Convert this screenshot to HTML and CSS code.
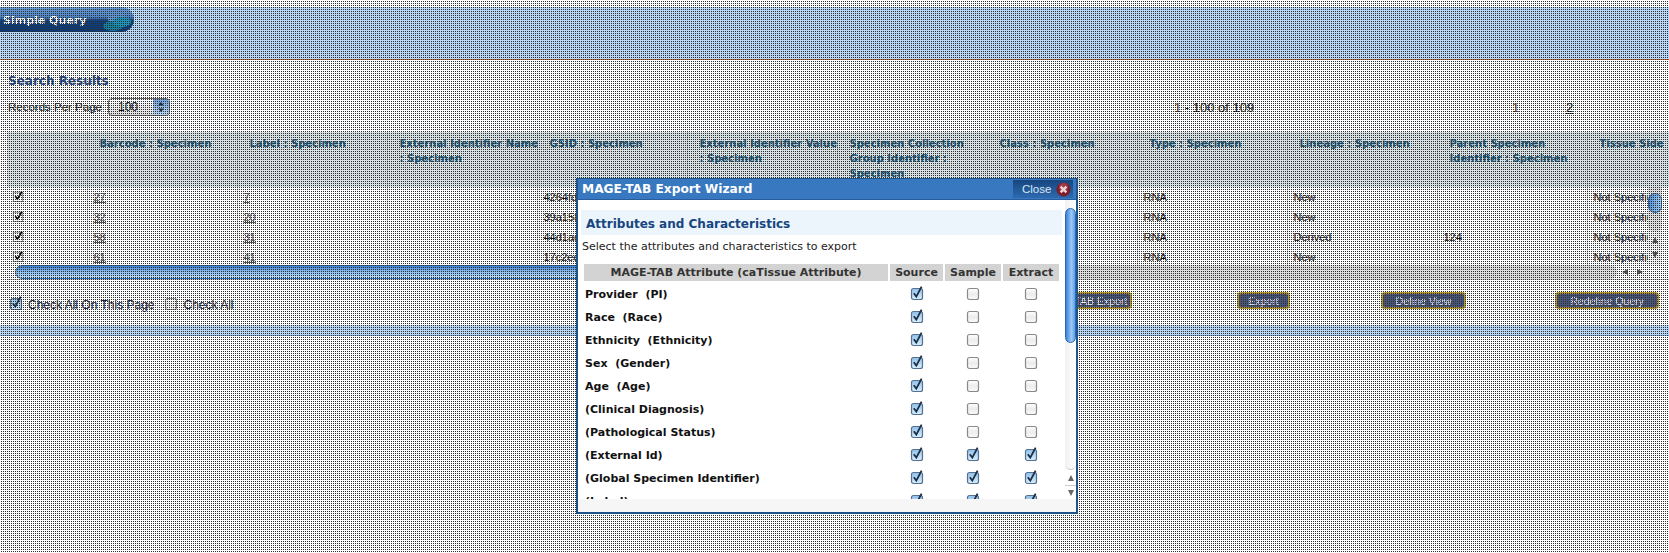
FILE: index.html
```html
<!DOCTYPE html>
<html lang="en">
<head>
<meta charset="utf-8">
<title>Search Results</title>
<link rel="stylesheet" href="styles.css">
</head>
<body>
<svg class="defs" width="0" height="0" aria-hidden="true">
  <defs>
    <linearGradient id="cbOn" x1="0" y1="0" x2="0" y2="1"><stop offset="0" stop-color="#8fbfe8"/><stop offset=".5" stop-color="#b5d9f5"/><stop offset="1" stop-color="#d6eefc"/></linearGradient>
    <linearGradient id="cbOff" x1="0" y1="0" x2="0" y2="1"><stop offset="0" stop-color="#fff"/><stop offset=".5" stop-color="#ececec"/><stop offset="1" stop-color="#fafafa"/></linearGradient>
    <symbol id="cb-on" viewBox="0 0 14 16"><rect x="1.5" y="3.5" width="11" height="11" rx="2" fill="url(#cbOn)" stroke="#56708f" stroke-width="1.2"/><path d="M3.8 8.2 6.3 11.6 11.6 1.6" fill="none" stroke="#1c2d44" stroke-width="1.8"/></symbol>
    <symbol id="cb-off" viewBox="0 0 14 16"><rect x="1.5" y="3.5" width="11" height="11" rx="2" fill="url(#cbOff)" stroke="#8a8a8a" stroke-width="1.2"/></symbol>
    <symbol id="cb-plain" viewBox="0 0 14 16"><rect x="1.5" y="3.5" width="11" height="11" fill="#fff" stroke="#777"/><path d="M3.8 8.2 6.3 11.6 11.6 3" fill="none" stroke="#000" stroke-width="2"/></symbol>
  </defs>
</svg>

<div class="page">
  <header class="topband">
    <div class="tab"><span class="tab-label">Simple Query</span>
      <svg class="tab-art" width="36" height="25" viewBox="0 0 36 25"><circle cx="18" cy="9" r="9" fill="#5f94d2"/><ellipse cx="15" cy="19" rx="10" ry="5" fill="#14809f"/><ellipse cx="24" cy="15" rx="9" ry="5" fill="#1a94b8"/></svg>
    </div>
  </header>

  <main class="results">
    <h2 class="results-title">Search Results</h2>
    <div class="toolbar">
      <div class="tb-left">
        <span>Records Per Page</span>
        <span class="select"><span class="select-value">100</span><span class="select-arrows"><svg width="8" height="12" viewBox="0 0 8 12"><path d="M4 1 7 4.6H1ZM4 11 1 7.4H7Z" fill="#1d2b3c"/></svg></span></span>
      </div>
      <div class="tb-count"><span class="accent">1</span> - 100 of 109</div>
      <div class="tb-page accent">1</div>
      <a class="tb-page-link">2</a>
    </div>

    <div class="grid-wrap">
      <div class="grid-clip">
        <table class="grid">
          <colgroup><col class="col-check"><col class="col"><col class="col"><col class="col"><col class="col"><col class="col"><col class="col"><col class="col"><col class="col"><col class="col"><col class="col"><col class="col"></colgroup>
          <thead>
            <tr>
              <th></th><th>Barcode : Specimen</th><th>Label : Specimen</th><th>External&nbsp;Identifier&nbsp;Name : Specimen</th><th>GSID : Specimen</th><th>External&nbsp;Identifier&nbsp;Value : Specimen</th><th>Specimen Collection Group Identifier : Specimen</th><th>Class : Specimen</th><th>Type : Specimen</th><th>Lineage : Specimen</th><th>Parent Specimen Identifier : Specimen</th><th>Tissue Side</th>
            </tr>
          </thead>
          <tbody>
            <tr><td><svg class="cb" viewBox="0 0 14 16"><use href="#cb-plain"/></svg></td><td><a>27</a></td><td><a>7</a></td><td></td><td>4264fd90</td><td></td><td></td><td>Molecular</td><td>RNA</td><td>New</td><td></td><td>Not Specified</td></tr>
            <tr><td><svg class="cb" viewBox="0 0 14 16"><use href="#cb-plain"/></svg></td><td><a>32</a></td><td><a>20</a></td><td></td><td>39a158c2</td><td></td><td></td><td>Molecular</td><td>RNA</td><td>New</td><td></td><td>Not Specified</td></tr>
            <tr><td><svg class="cb" viewBox="0 0 14 16"><use href="#cb-plain"/></svg></td><td><a>58</a></td><td><a>31</a></td><td></td><td>44d1ad07</td><td></td><td></td><td>Molecular</td><td>RNA</td><td>Derived</td><td>124</td><td>Not Specified</td></tr>
            <tr><td><svg class="cb" viewBox="0 0 14 16"><use href="#cb-plain"/></svg></td><td><a>61</a></td><td><a>41</a></td><td></td><td>17c2ed36</td><td></td><td></td><td>Molecular</td><td>RNA</td><td>New</td><td></td><td>Not Specified</td></tr>
          </tbody>
        </table>
      </div>
      <div class="hscroll">
        <div class="hscroll-track"><div class="hscroll-thumb"></div></div>
        <div class="hscroll-arrows"><i class="arrow-left"></i><i class="arrow-right"></i></div>
      </div>
      <div class="vscroll">
        <div class="vscroll-track"><div class="vscroll-thumb"></div></div>
        <i class="arrow-up"></i><i class="arrow-down"></i>
      </div>
    </div>

    <div class="actions">
      <div class="checks">
        <svg class="cb-foot" viewBox="0 0 14 16"><use href="#cb-on"/></svg><span class="check-label">Check All On This Page</span>
        <svg class="cb-foot cb-gap" viewBox="0 0 14 16"><use href="#cb-off"/></svg><span class="check-label">Check All</span>
      </div>
      <button class="btn btn-mage">MAGE-TAB Export</button>
      <button class="btn btn-export">Export</button>
      <button class="btn btn-view">Define View</button>
      <button class="btn btn-query">Redefine Query</button>
    </div>
  </main>
  <div class="bottomband"></div>
</div>

<div class="dots"></div>

<section class="modal">
  <div class="modal-bar">
    <span class="modal-title">MAGE-TAB Export Wizard</span>
    <span class="modal-close">Close
      <svg width="15" height="15" viewBox="0 0 15 15"><circle cx="7.5" cy="7.5" r="7" fill="#7c1f2c"/><circle cx="7.5" cy="5.5" r="4.5" fill="#a03a48"/><path d="M4.6 4.6 10.4 10.4M10.4 4.6 4.6 10.4" stroke="#ecd3d6" stroke-width="2.4"/></svg>
    </span>
  </div>
  <div class="modal-body">
    <div class="modal-content">
      <h3 class="modal-heading">Attributes and Characteristics</h3>
      <p class="modal-intro">Select the attributes and characteristics to export</p>
      <table class="attrs">
        <thead><tr><th class="attr-name">MAGE-TAB Attribute (caTissue Attribute)</th><th class="attr-source">Source</th><th>Sample</th><th>Extract</th></tr></thead>
        <tbody>
          <tr><td>Provider&nbsp; (PI)</td><td><svg class="mcb" viewBox="0 0 14 16"><use href="#cb-on"/></svg></td><td><svg class="mcb" viewBox="0 0 14 16"><use href="#cb-off"/></svg></td><td><svg class="mcb" viewBox="0 0 14 16"><use href="#cb-off"/></svg></td></tr>
          <tr><td>Race&nbsp; (Race)</td><td><svg class="mcb" viewBox="0 0 14 16"><use href="#cb-on"/></svg></td><td><svg class="mcb" viewBox="0 0 14 16"><use href="#cb-off"/></svg></td><td><svg class="mcb" viewBox="0 0 14 16"><use href="#cb-off"/></svg></td></tr>
          <tr><td>Ethnicity&nbsp; (Ethnicity)</td><td><svg class="mcb" viewBox="0 0 14 16"><use href="#cb-on"/></svg></td><td><svg class="mcb" viewBox="0 0 14 16"><use href="#cb-off"/></svg></td><td><svg class="mcb" viewBox="0 0 14 16"><use href="#cb-off"/></svg></td></tr>
          <tr><td>Sex&nbsp; (Gender)</td><td><svg class="mcb" viewBox="0 0 14 16"><use href="#cb-on"/></svg></td><td><svg class="mcb" viewBox="0 0 14 16"><use href="#cb-off"/></svg></td><td><svg class="mcb" viewBox="0 0 14 16"><use href="#cb-off"/></svg></td></tr>
          <tr><td>Age&nbsp; (Age)</td><td><svg class="mcb" viewBox="0 0 14 16"><use href="#cb-on"/></svg></td><td><svg class="mcb" viewBox="0 0 14 16"><use href="#cb-off"/></svg></td><td><svg class="mcb" viewBox="0 0 14 16"><use href="#cb-off"/></svg></td></tr>
          <tr><td>(Clinical Diagnosis)</td><td><svg class="mcb" viewBox="0 0 14 16"><use href="#cb-on"/></svg></td><td><svg class="mcb" viewBox="0 0 14 16"><use href="#cb-off"/></svg></td><td><svg class="mcb" viewBox="0 0 14 16"><use href="#cb-off"/></svg></td></tr>
          <tr><td>(Pathological Status)</td><td><svg class="mcb" viewBox="0 0 14 16"><use href="#cb-on"/></svg></td><td><svg class="mcb" viewBox="0 0 14 16"><use href="#cb-off"/></svg></td><td><svg class="mcb" viewBox="0 0 14 16"><use href="#cb-off"/></svg></td></tr>
          <tr><td>(External Id)</td><td><svg class="mcb" viewBox="0 0 14 16"><use href="#cb-on"/></svg></td><td><svg class="mcb" viewBox="0 0 14 16"><use href="#cb-on"/></svg></td><td><svg class="mcb" viewBox="0 0 14 16"><use href="#cb-on"/></svg></td></tr>
          <tr><td>(Global Specimen Identifier)</td><td><svg class="mcb" viewBox="0 0 14 16"><use href="#cb-on"/></svg></td><td><svg class="mcb" viewBox="0 0 14 16"><use href="#cb-on"/></svg></td><td><svg class="mcb" viewBox="0 0 14 16"><use href="#cb-on"/></svg></td></tr>
          <tr><td>(Label)</td><td><svg class="mcb" viewBox="0 0 14 16"><use href="#cb-on"/></svg></td><td><svg class="mcb" viewBox="0 0 14 16"><use href="#cb-on"/></svg></td><td><svg class="mcb" viewBox="0 0 14 16"><use href="#cb-on"/></svg></td></tr>
        </tbody>
      </table>
    </div>
    <div class="modal-scroll">
      <div class="modal-track"><div class="modal-thumb"></div></div>
      <div class="modal-arrows"><i class="marrow-up"></i><i class="marrow-sep"></i><i class="marrow-down"></i></div>
    </div>
  </div>
  <div class="modal-foot"></div>
</section>
</body>
</html>
```
FILE: styles.css
```css
* { box-sizing: border-box; }
html, body { margin: 0; padding: 0; height: 100%; overflow: hidden; }
body { background: #fff; font-family: "Liberation Sans", Arial, sans-serif; font-size: 12px; color: #111; }
.defs { position: absolute; }

.dots {
  position: fixed; inset: 0; z-index: 10; pointer-events: none;
  background-image: conic-gradient(transparent 25%, #2e2e2e 0 50%, transparent 0);
  background-size: 2px 2px;
}

.topband { margin-top: 7px; height: 53px; background: #b9d7f6; border-bottom: 1px solid #d2691e; }
.tab { position: relative; width: 134px; height: 25px; display: flex; align-items: center; padding-top: 1px; border-radius: 0 14px 14px 0; overflow: hidden;
  background: linear-gradient(#6a9fdc 0, #4f86c8 40%, #0e3f80 55%, #0c3a78 100%); }
.tab-label { padding-left: 3px; font: bold 11px "DejaVu Sans", sans-serif; color: #fff; position: relative; z-index: 1; }
.tab-art { position: absolute; right: 0; top: 0; }

.results-title { margin: 13px 0 0 8px; height: 16px; font: bold 12px/16px "DejaVu Sans", sans-serif; color: #1f4b8e; }
.toolbar { display: flex; align-items: center; height: 18px; margin-top: 9px; padding-left: 8px; }
.tb-left { width: 1166px; display: flex; align-items: center; gap: 6px; font-size: 11.5px; }
.tb-count { width: 338px; font-size: 13px; }
.tb-page { width: 54px; font-size: 13px; }
.tb-page-link { text-decoration: underline; font-size: 13px; }
.accent { color: #6b2a20; }
.select { width: 62px; height: 18px; display: flex; border: 1px solid #666; border-radius: 4px; overflow: hidden; background: linear-gradient(#fff, #ddd); }
.select-value { flex: 1; padding-left: 9px; line-height: 16px; font-size: 12px; }
.select-arrows { width: 16px; display: flex; align-items: center; justify-content: center; background: linear-gradient(#6ea6e6, #bcd9f7); }

.grid-wrap { position: relative; margin: 16px 0 0 7px; height: 148px; border-bottom: 1px solid #ccc; }
.grid-clip { height: 133px; overflow: hidden; }
.grid { table-layout: fixed; width: 1730px; border-collapse: collapse; }
.col-check { width: 80px; }
.col { width: 150px; }
.grid th { height: 55px; padding: 4px 0 0 12px; vertical-align: top; text-align: left; background: #d7e0e2; border-right: 1px solid #bbb;
  font: bold 10px/15px "DejaVu Sans", sans-serif; color: #16577c; }
.grid td { height: 20px; padding: 0 6px; border-right: 1px solid #ccc; font-size: 11px; white-space: nowrap; overflow: hidden; }
.grid a { color: #555; text-decoration: underline; }
.cb { display: block; width: 12px; height: 14px; margin: -2px 0 0 -1px; }

.hscroll { display: flex; height: 14px; padding-left: 8px; }
.hscroll-track { width: 1602px; height: 14px; border-radius: 7px; background: #ddd; overflow: hidden; }
.hscroll-thumb { width: 700px; height: 14px; border-radius: 7px; border: 1px solid #2f6bb0; background: linear-gradient(#3f86d8, #8cc1f3 50%, #bfe0fa); }
.hscroll-arrows { display: flex; align-items: center; gap: 9px; padding-left: 5px; }
.arrow-left { width: 0; height: 0; border: 3.5px solid transparent; border-left-width: 0; border-right: 6px solid #555; }
.arrow-right { width: 0; height: 0; border: 3.5px solid transparent; border-right-width: 0; border-left: 6px solid #555; }

.vscroll { position: absolute; left: 1641px; top: 55px; width: 14px; height: 78px; background: #f2f2f2; display: flex; flex-direction: column; align-items: center; }
.vscroll-track { width: 14px; height: 45px; background: #ddd; border-radius: 0 0 7px 7px; flex: none; }
.vscroll-thumb { margin-top: 6px; height: 20px; border-radius: 7px; border: 1px solid #2f6bb0; background: linear-gradient(90deg, #4f92de, #a6d0f6); }
.arrow-up { margin-top: 5px; width: 0; height: 0; border: 3.5px solid transparent; border-top-width: 0; border-bottom: 6px solid #555; }
.arrow-down { margin-top: 9px; width: 0; height: 0; border: 3.5px solid transparent; border-bottom-width: 0; border-top: 6px solid #555; }

.actions { display: flex; align-items: flex-start; margin-top: 12px; padding-left: 7px; height: 16px; }
.checks { width: 1028px; display: flex; align-items: center; height: 24px; padding: 1px 0 0 1px; }
.cb-foot { width: 14px; height: 16px; margin: -3px 5px 0 1px; flex: none; }
.cb-gap { margin-left: 9px; margin-right: 6px; }
.check-label { color: #1a2440; }
.btn { height: 17px; padding: 0; border: 2px solid #b8982a; border-radius: 4px; background: #48557a; color: #eef0f6; font: 10.5px/12px "Liberation Sans", sans-serif; }
.btn-mage { width: 97px; }
.btn-export { width: 53px; margin-left: 105px; }
.btn-view { width: 85px; margin-left: 91px; }
.btn-query { width: 104px; margin-left: 89px; }

.bottomband { margin-top: 17px; height: 11px; background: #b9d7f6; border-bottom: 1px solid #7eaee0; }

.modal { position: fixed; left: 576px; top: 178px; width: 502px; height: 336px; z-index: 20; display: flex; flex-direction: column; border: 2px solid #1f5289; border-top: 1px solid #1f5289; background: #fff; }
.modal-bar { height: 21px; flex: none; display: flex; align-items: center; justify-content: space-between; padding: 0 3px 0 4px; background: #3778c0; border-bottom: 1px solid #285c9a; }
.modal-title { font: bold 12.2px "DejaVu Sans", sans-serif; color: #fff; }
.modal-close { width: 60px; height: 18px; display: flex; align-items: center; gap: 5px; padding-left: 9px; color: #dbe6f3; font-size: 11.5px; background: linear-gradient(#17467f, #2c6ab0); }
.modal-body { flex: 1; min-height: 0; display: flex; overflow: hidden; }
.modal-content { width: 487px; padding: 10px 3px 0 3px; flex: none; }
.modal-heading { margin: 0; height: 25px; padding-left: 5px; background: #ecf4fc; font: bold 12px/28px "DejaVu Sans", sans-serif; color: #17457f; }
.modal-intro { margin: 4px 0 0 1px; height: 16px; font: 11px/16px "DejaVu Sans", sans-serif; color: #222; }
.attrs { margin: 9px 0 0 1px; width: 479px; table-layout: fixed; border-collapse: separate; border-spacing: 2px 0; }
.attrs th { height: 19px; padding: 0; border-bottom: 2px solid #fff; background: #d3d3d3; background-clip: padding-box; color: #333; font: bold 11px "DejaVu Sans", sans-serif; width: 56px; }
.attrs th.attr-name { width: 304px; }
.attrs th.attr-source { width: 53px; }
.attrs td { height: 23px; padding: 0 0 0 1px; font: bold 11px "DejaVu Sans", sans-serif; color: #111; white-space: nowrap; }
.attrs td + td { text-align: center; padding: 0; }
.mcb { display: inline-block; vertical-align: middle; width: 14px; height: 16px; margin-top: -4px; }

.modal-scroll { flex: 1; padding: 0; display: flex; flex-direction: column; }
.modal-track { height: 270px; flex: none; background: linear-gradient(90deg, #f1f1f1, #fff); border-radius: 0 0 6px 6px; border-bottom: 1px solid #ccc; padding-top: 8px; }
.modal-thumb { height: 135px; border-radius: 6px; border: 1px solid #2a68b8; background: linear-gradient(90deg, #3a80da, #9ccbf5 60%, #5b9fe6); }
.modal-arrows { display: flex; flex-direction: column; align-items: center; padding-top: 5px; }
.marrow-up { width: 0; height: 0; border: 3.5px solid transparent; border-top-width: 0; border-bottom: 6px solid #666; }
.marrow-sep { width: 100%; margin-top: 4px; border-top: 1px solid #ccc; }
.marrow-down { margin-top: 4px; width: 0; height: 0; border: 3.5px solid transparent; border-bottom-width: 0; border-top: 6px solid #666; }
.modal-foot { height: 13px; flex: none; background: #f6f6f6; }
```
